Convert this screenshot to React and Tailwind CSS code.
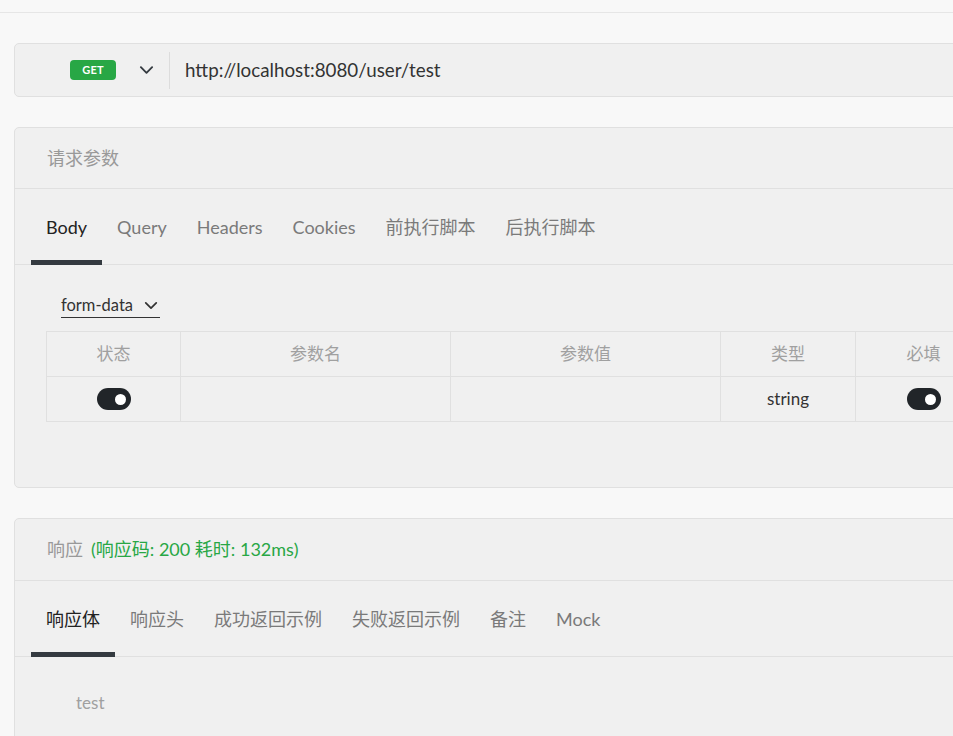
import React from "react";

const latin = { fontFamily: 'Lato, "Noto Sans CJK SC", sans-serif' };

function Chevron({ className }) {
  return (
    <svg viewBox="0 0 16 10" className={className} fill="none" stroke="currentColor" strokeWidth="2" strokeLinecap="round" strokeLinejoin="round">
      <path d="M2 2 L8 8 L14 2" />
    </svg>
  );
}

function Toggle() {
  return (
    <div className="w-[34px] h-[22px] rounded-full bg-[#212529] flex items-center justify-end pr-[5px]">
      <div className="w-[11px] h-[11px] rounded-full bg-white" />
    </div>
  );
}

function Tabs({ items, active }) {
  return (
    <div className="flex h-[76px] border-b border-[#e0e0e0] pl-[16px]">
      {items.map((t, i) => (
        <div
          key={t}
          className={
            "px-[15px] pt-[5px] flex items-center text-[18px] border-b-[5px] -mb-px " +
            (i === active ? "border-[#343a40] text-[#222]" : "border-transparent text-[#7a7a7a]")
          }
        >
          {t}
        </div>
      ))}
    </div>
  );
}

export default function App() {
  return (
    <div className="w-[953px] h-[736px] overflow-hidden bg-[#f8f8f8]" style={latin}>
      <div className="h-[13px] border-b border-[#e6e6e6]" />
      <div className="w-[1000px] pl-[14px] pt-[30px] flex flex-col gap-[30px]">
        {/* URL bar */}
        <div className="h-[54px] rounded-[5px] border border-[#e0e0e0] bg-[#f0f0f0] flex items-center">
          <div className="pl-[55px] flex items-center">
            <div className="w-[46px] h-[20px] rounded-[4px] bg-[#28a745] text-white text-[11px] font-bold flex items-center justify-center tracking-wide">
              GET
            </div>
            <Chevron className="w-[15px] h-[10px] ml-[23px] text-[#343a40]" />
          </div>
          <div className="w-px h-[37px] bg-[#dcdcdc] ml-[15px]" />
          <div className="ml-[15px] text-[18.8px] text-[#333]">http://localhost:8080/user/test</div>
        </div>

        {/* Request params */}
        <div className="h-[361px] rounded-[5px] border border-[#e0e0e0] bg-[#f0f0f0] flex flex-col">
          <div className="h-[61px] border-b border-[#e0e0e0] flex items-center pl-[32px] text-[18px] text-[#999]">
            请求参数
          </div>
          <Tabs items={["Body", "Query", "Headers", "Cookies", "前执行脚本", "后执行脚本"]} active={0} />
          <div className="pl-[31px] pt-[28px]">
            <div className="ml-[15px] inline-flex items-center gap-[11px] border-b border-[#333] pb-[2px] pr-[2px] text-[16.5px] text-[#333] leading-[19px]">
              form-data
              <Chevron className="w-[14px] h-[9px] text-[#333]" />
            </div>
            <div className="mt-[13px] w-[950px] border border-[#e0e0e0]">
              <div className="flex h-[45px] border-b border-[#e0e0e0] text-[17px] text-[#a0a0a0]">
                <div className="w-[134px] border-r border-[#e0e0e0] flex items-center justify-center">状态</div>
                <div className="w-[270px] border-r border-[#e0e0e0] flex items-center justify-center">参数名</div>
                <div className="w-[270px] border-r border-[#e0e0e0] flex items-center justify-center">参数值</div>
                <div className="w-[135px] border-r border-[#e0e0e0] flex items-center justify-center">类型</div>
                <div className="w-[135px] flex items-center justify-center">必填</div>
              </div>
              <div className="flex h-[44px] text-[17px] text-[#333]">
                <div className="w-[134px] border-r border-[#e0e0e0] flex items-center justify-center"><Toggle /></div>
                <div className="w-[270px] border-r border-[#e0e0e0]" />
                <div className="w-[270px] border-r border-[#e0e0e0]" />
                <div className="w-[135px] border-r border-[#e0e0e0] flex items-center justify-center">string</div>
                <div className="w-[135px] flex items-center justify-center"><Toggle /></div>
              </div>
            </div>
          </div>
        </div>

        {/* Response */}
        <div className="h-[300px] rounded-[5px] border border-[#e0e0e0] bg-[#f0f0f0] flex flex-col">
          <div className="h-[62px] border-b border-[#e0e0e0] flex items-center pl-[32px] text-[18px]">
            <span className="text-[#999]">响应</span>
            <span className="ml-[8px] text-[#28a745]">(响应码: 200 耗时: 132ms)</span>
          </div>
          <Tabs items={["响应体", "响应头", "成功返回示例", "失败返回示例", "备注", "Mock"]} active={0} />
          <div className="pl-[61px] pt-[33px] text-[17px] text-[#a0a0a0]">test</div>
        </div>
      </div>
    </div>
  );
}
